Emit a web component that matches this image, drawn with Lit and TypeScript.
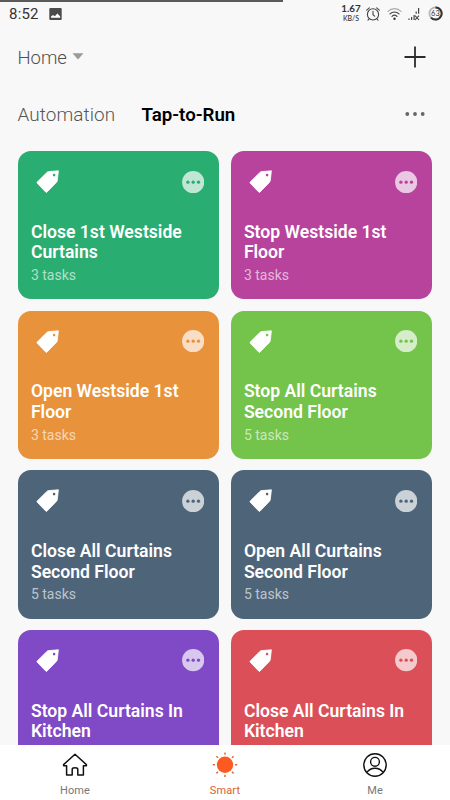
import { LitElement, html, css, svg } from "lit";
import { customElement, property } from "lit/decorators.js";

interface Scene {
  title: string[];
  tasks: number;
  color: string;
}

const SCENES: Scene[] = [
  { title: ["Close 1st Westside", "Curtains"], tasks: 3, color: "#29ad70" },
  { title: ["Stop Westside 1st", "Floor"], tasks: 3, color: "#b7439d" },
  { title: ["Open Westside 1st", "Floor"], tasks: 3, color: "#e9923c" },
  { title: ["Stop All Curtains", "Second Floor"], tasks: 5, color: "#74c34a" },
  { title: ["Close All Curtains", "Second Floor"], tasks: 5, color: "#4e6479" },
  { title: ["Open All Curtains", "Second Floor"], tasks: 5, color: "#4e6479" },
  { title: ["Stop All Curtains In", "Kitchen"], tasks: 0, color: "#8049c6" },
  { title: ["Close All Curtains In", "Kitchen"], tasks: 0, color: "#db4f58" },
];

@customElement("scene-card")
class SceneCard extends LitElement {
  @property({ attribute: false }) scene!: Scene;

  static styles = css`
    :host { display: block; }
    .card {
      box-sizing: border-box;
      height: 148.4px;
      border-radius: 13px;
      padding: 19px 15px 0 13.3px;
      color: #fff;
    }
    .icons { display: flex; justify-content: space-between; height: 24px; }
    .tag { width: 24px; height: 24px; margin-left: 5.5px; display: block; }
    .more { width: 22.4px; height: 22.4px; margin-top: 0.5px; display: block; }
    .title {
      margin-top: 27.9px;
      font-size: 17.6px;
      line-height: 20.6px;
      font-weight: 600;
      white-space: nowrap;
    }
    .line { display: block; }
    .tasks {
      margin-top: 3.2px;
      font-size: 14px;
      line-height: 18px;
      font-weight: 400;
      color: rgba(255, 255, 255, 0.64);
    }
  `;

  render() {
    const s = this.scene;
    return html`
      <div class="card" style="background:${s.color}">
        <div class="icons">
          <svg class="tag" viewBox="0 0 24 24">
            <path fill="#fff" stroke="#fff" stroke-width=".8" stroke-linejoin="round"
              d="M22.4 .8 L12.6 1.6 Q11.6 1.7 10.9 2.4 L1.2 12.1 Q.7 12.7 1.2 13.2 L9.9 22.2 Q10.4 22.7 10.9 22.2 L20.6 12.2 Q21.2 11.5 21.3 10.6 Z" />
            <circle cx="18.1" cy="5.1" r="1.3" fill=${s.color} />
          </svg>
          <svg class="more" viewBox="0 0 22.4 22.4">
            <circle cx="11.2" cy="11.2" r="11.1" fill="#fff" fill-opacity=".7" />
            ${[5.9, 11.2, 16.5].map((x) => svg`<circle cx=${x} cy="11.2" r="1.65" fill=${s.color} />`)}
          </svg>
        </div>
        <div class="title">${s.title.map((t) => html`<span class="line">${t}</span>`)}</div>
        ${s.tasks ? html`<div class="tasks">${s.tasks} tasks</div>` : null}
      </div>
    `;
  }
}

@customElement("app-root")
class AppRoot extends LitElement {
  static styles = css`
    :host {
      display: flex;
      flex-direction: column;
      position: relative;
      width: 450px;
      height: 800px;
      overflow: hidden;
      background: #f8f8f8;
      font-family: Roboto, "Liberation Sans", sans-serif;
    }
    svg { display: block; flex: none; }
    .progress { position: absolute; left: 0; top: 0; width: 283px; height: 2px; background: #5a5a5a; }
    .status {
      display: flex;
      align-items: center;
      height: 27px;
      padding: 0 7px 0 9px;
      color: #333;
      flex: none;
    }
    .clock { font-size: 15px; line-height: 20px; letter-spacing: 0.2px; width: 40px; }
    .spacer { flex: 1; }
    .speed {
      display: flex;
      flex-direction: column;
      align-items: center;
      width: 20px;
      margin-right: 5px;
      margin-top: -1px;
      white-space: nowrap;
      font-family: Lato, sans-serif;
    }
    .rate { font-size: 9.8px; line-height: 9.5px; font-weight: 700; }
    .unit { font-size: 7px; line-height: 8px; font-weight: 500; }
    .alarm { margin-right: 7px; }
    .wifi { margin-right: 6px; }
    .signal { margin-right: 8px; }
    .head {
      display: flex;
      align-items: center;
      justify-content: space-between;
      height: 60px;
      padding: 0 24px 0 17.5px;
      flex: none;
    }
    .home {
      display: flex;
      align-items: center;
      gap: 5px;
      margin-top: 2px;
      font-size: 18.5px;
      line-height: 24px;
      font-weight: 300;
      color: #505050;
    }
    .caret { margin-top: -3px; }
    .tabs {
      display: flex;
      align-items: center;
      height: 54px;
      padding: 0 24px 0 17.5px;
      flex: none;
      font-size: 18.9px;
      line-height: 24px;
    }
    .tab { font-weight: 300; color: #555; width: 124px; letter-spacing: 0.1px; margin-top: 1px; }
    .active { font-weight: 600; color: #000; font-size: 18.7px; margin-top: 1px; }
    .grid {
      display: grid;
      grid-template-columns: 201.8px 201.8px;
      column-gap: 11.2px;
      row-gap: 11.2px;
      padding: 10px 0 0 17.6px;
      flex: 1;
      min-height: 0;
      overflow: hidden;
      align-content: start;
    }
    .nav {
      display: grid;
      grid-template-columns: repeat(3, 1fr);
      height: 55px;
      background: #fff;
      flex: none;
    }
    .item {
      display: flex;
      flex-direction: column;
      align-items: center;
      padding-top: 6px;
      font-size: 11px;
      color: #777;
      letter-spacing: 0.1px;
    }
    .label { line-height: 14px; margin-top: 7px; }
    .current { color: #d9602f; }
  `;

  render() {
    return html`
      <div class="progress"></div>
      <div class="status">
        <span class="clock">8:52</span>
        <svg width="13" height="12" viewBox="0 0 13 12">
          <rect x=".3" y="0" width="12.4" height="12" rx="1" fill="#4b4b4b" />
          <path d="M2 9.8V8.6L4 7L5.8 8.2L8.4 5.6L11.2 8.6V9.8Z" fill="#fff" />
        </svg>
        <span class="spacer"></span>
        <span class="speed"><span class="rate">1.67</span><span class="unit">KB/S</span></span>
        <svg class="alarm" width="14" height="14" viewBox="0 0 14 14" fill="none" stroke="#444" stroke-width="1.1" stroke-linecap="round">
          <circle cx="7" cy="7.4" r="5.6" />
          <path d="M7 4.3V7.7L8.6 9.2M.7 3.2L3.3.9M13.3 3.2L10.7.9M3 12L2 13.2M11 12L12 13.2" />
        </svg>
        <svg class="wifi" width="15" height="14" viewBox="0 0 15 14" fill="none" stroke-linecap="round">
          <path d="M1 4.4A9 9 0 0 1 14 4.4" stroke="#aaa" stroke-width="1.1" />
          <path d="M3 6.9A6.3 6.3 0 0 1 12 6.9" stroke="#444" stroke-width="1.2" />
          <path d="M5 9.4A3.6 3.6 0 0 1 10 9.4" stroke="#444" stroke-width="1.2" />
          <circle cx="7.5" cy="11.7" r="1.2" fill="#333" />
        </svg>
        <svg class="signal" width="12" height="14" viewBox="0 0 12 14" fill="none" stroke="#444" stroke-width="1.2">
          <path d="M1 11.6V13M3.6 10V13M6.1 8V13M8.2 4.4V6.8M10.6 1V6.8" />
          <path d="M7 8.6L11 13M11 8.6L7 13" stroke-width="1.1" />
        </svg>
        <svg width="15" height="15" viewBox="0 0 15 15">
          <circle cx="7.5" cy="7.5" r="6.1" fill="none" stroke="#b8b8b8" stroke-width="1.8" />
          <path d="M7.5 1.4A6.1 6.1 0 1 1 3 11.6" fill="none" stroke="#333" stroke-width="2" />
          <text x="7.4" y="10.2" text-anchor="middle" font-size="7.4" fill="#333" font-family="Lato">63</text>
        </svg>
      </div>
      <div class="head">
        <div class="home">
          <span>Home</span>
          <svg class="caret" width="12" height="7" viewBox="0 0 12 7"><path d="M.5 .3H11.5L6 6.6Z" fill="#9a9a9a" /></svg>
        </div>
        <svg width="22" height="22" viewBox="0 0 22 22"><path d="M11 .5V21.5M.5 11H21.5" stroke="#2c2c2c" stroke-width="1.8" /></svg>
      </div>
      <div class="tabs">
        <span class="tab">Automation</span>
        <span class="active">Tap-to-Run</span>
        <span class="spacer"></span>
        <svg width="22" height="6" viewBox="0 0 22 6" fill="#666">
          <circle cx="3.3" cy="3" r="1.9" /><circle cx="11" cy="3" r="1.9" /><circle cx="18.7" cy="3" r="1.9" />
        </svg>
      </div>
      <div class="grid">${SCENES.map((s) => html`<scene-card .scene=${s}></scene-card>`)}</div>
      <div class="nav">
        <div class="item">
          <svg width="26" height="26" viewBox="0 0 26 26" fill="none" stroke="#111" stroke-width="1.5" stroke-linejoin="round">
            <path d="M13 3.2L24.4 13.6V14.8H21.4V24H15.8V18.4Q15.8 16.8 13 16.8Q10.2 16.8 10.2 18.4V24H4.6V14.8H1.6V13.6Z" />
          </svg>
          <span class="label">Home</span>
        </div>
        <div class="item current">
          <svg width="26" height="26" viewBox="0 0 26 26">
            <circle cx="13" cy="13.8" r="8.2" fill="#fc5a20" />
            <path d="M13 1.6V3.8M13 23.8V26M.8 13.8H3M23 13.8H25.2M4.4 5.2L6 6.8M20 20.8L21.6 22.4M4.4 22.4L6 20.8M20 6.8L21.6 5.2" stroke="#d4703f" stroke-width="1.5" />
          </svg>
          <span class="label">Smart</span>
        </div>
        <div class="item">
          <svg width="26" height="26" viewBox="0 0 26 26" fill="none" stroke="#111" stroke-width="1.4">
            <circle cx="13" cy="14" r="11.2" /><circle cx="13" cy="10.8" r="4.4" />
            <path d="M4.8 21.4Q8 17.2 13 17.2Q18 17.2 21.2 21.4" />
          </svg>
          <span class="label">Me</span>
        </div>
      </div>
    `;
  }
}
